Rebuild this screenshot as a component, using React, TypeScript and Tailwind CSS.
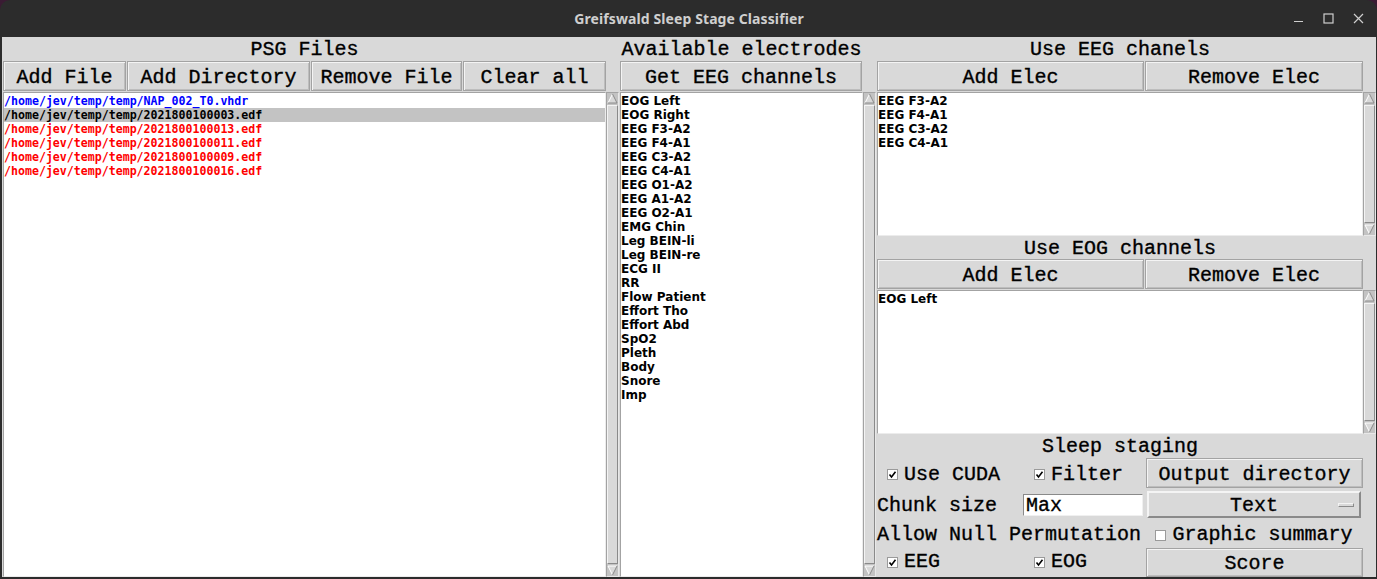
import React from "react";

const MONO = "font-['Liberation_Mono',monospace] [-webkit-text-stroke:0.35px_#000]";

function Heading({ children, className = "" }: { children: React.ReactNode; className?: string }) {
  return (
    <div className={"flex items-center justify-center pt-[2px] text-[20px] leading-none text-black " + MONO + " " + className}>
      {children}
    </div>
  );
}

function Btn({ children, className = "" }: { children: React.ReactNode; className?: string }) {
  return (
    <div
      className={
        "flex items-center justify-center pt-[3px] bg-[#d9d9d9] border border-[#a3a3a3] shadow-[inset_1px_1px_0_#f4f4f4,inset_-1px_-1px_0_#bdbdbd] text-[20px] leading-none text-black whitespace-pre " +
        MONO +
        " " +
        className
      }
    >
      {children}
    </div>
  );
}

function Arrow({ up }: { up: boolean }) {
  return (
    <svg width="11" height="11" viewBox="0 0 11 11" className="block shrink-0">
      {up ? (
        <>
          <polygon points="5.5,1 10,10 1,10" fill="#d9d9d9" />
          <path d="M1 10 L5.5 1" stroke="#ffffff" strokeWidth="1" fill="none" />
          <path d="M5.5 1 L10 10 L1 10" stroke="#8a8a8a" strokeWidth="1" fill="none" />
        </>
      ) : (
        <>
          <polygon points="1,1 10,1 5.5,10" fill="#d9d9d9" />
          <path d="M5.5 10 L1 1 L10 1" stroke="#ffffff" strokeWidth="1" fill="none" />
          <path d="M10 1 L5.5 10" stroke="#8a8a8a" strokeWidth="1" fill="none" />
        </>
      )}
    </svg>
  );
}

function Scrollbar() {
  return (
    <div className="flex flex-col w-[13px] shrink-0 bg-[#c3c3c3] border border-[#a3a3a3] border-r-[#e8e8e8] border-b-[#e8e8e8]">
      <Arrow up />
      <div className="flex-1 my-px bg-[#d9d9d9] border border-t-[#f4f4f4] border-l-[#f4f4f4] border-b-[#8a8a8a] border-r-[#8a8a8a]" />
      <Arrow up={false} />
    </div>
  );
}

function Listbox({ children, className = "" }: { children?: React.ReactNode; className?: string }) {
  return (
    <div
      className={
        "bg-white border border-t-[#a3a3a3] border-l-[#a3a3a3] border-b-[#ececec] border-r-[#ececec] pt-px overflow-hidden " +
        className
      }
    >
      {children}
    </div>
  );
}

function Check({ checked }: { checked: boolean }) {
  return (
    <svg width="11" height="11" viewBox="0 0 11 11" className="block shrink-0">
      <rect x="0.5" y="0.5" width="10" height="10" fill="#ffffff" stroke="#9a9a9a" />
      {checked && <path d="M2.5 5.5 L4.5 8 L8.5 2.8" stroke="#000" strokeWidth="1.6" fill="none" />}
    </svg>
  );
}

function CheckLabel({ checked, label, className = "" }: { checked: boolean; label: string; className?: string }) {
  return (
    <div className={"flex items-center gap-[6px] text-[20px] leading-none text-black " + MONO + " " + className}>
      <Check checked={checked} />
      <span className="whitespace-pre">{label}</span>
    </div>
  );
}

const psgFiles: { name: string; color: string; sel?: boolean }[] = [
  { name: "/home/jev/temp/temp/NAP_002_T0.vhdr", color: "text-[#0000ff]" },
  { name: "/home/jev/temp/temp/2021800100003.edf", color: "text-black", sel: true },
  { name: "/home/jev/temp/temp/2021800100013.edf", color: "text-[#ff0000]" },
  { name: "/home/jev/temp/temp/2021800100011.edf", color: "text-[#ff0000]" },
  { name: "/home/jev/temp/temp/2021800100009.edf", color: "text-[#ff0000]" },
  { name: "/home/jev/temp/temp/2021800100016.edf", color: "text-[#ff0000]" },
];

const electrodes = [
  "EOG Left",
  "EOG Right",
  "EEG F3-A2",
  "EEG F4-A1",
  "EEG C3-A2",
  "EEG C4-A1",
  "EEG O1-A2",
  "EEG A1-A2",
  "EEG O2-A1",
  "EMG Chin",
  "Leg BEIN-li",
  "Leg BEIN-re",
  "ECG II",
  "RR",
  "Flow Patient",
  "Effort Tho",
  "Effort Abd",
  "SpO2",
  "Pleth",
  "Body",
  "Snore",
  "Imp",
];

const ITEM = "h-[14px] leading-[14px] text-[12px] font-bold text-black whitespace-pre font-['DejaVu_Sans',sans-serif]";

export default function App() {
  return (
    <div className="w-[1377px] h-[579px] bg-[#3a1b33] overflow-hidden">
      <div className="flex flex-col h-[579px] rounded-t-[10px] overflow-hidden bg-[#2c2c2c] pl-[2px] pr-[1px] pb-[2px]">
        {/* Title bar */}
        <div className="relative flex items-center justify-center h-[37px] shrink-0">
          <span className="text-[14px] font-bold text-[#cfcfcf] font-['Noto_Sans',sans-serif] tracking-[0.1px]">
            Greifswald Sleep Stage Classifier
          </span>
          <div className="absolute right-[12px] top-0 h-[37px] flex items-center gap-[19px]">
            <svg width="11" height="11" viewBox="0 0 11 11">
              <path d="M1 8.5 H10" stroke="#cfcfcf" strokeWidth="1.2" />
            </svg>
            <svg width="11" height="11" viewBox="0 0 11 11">
              <rect x="1" y="1" width="9" height="9" fill="none" stroke="#cfcfcf" strokeWidth="1.2" />
            </svg>
            <svg width="11" height="11" viewBox="0 0 11 11">
              <path d="M1 1 L10 10 M10 1 L1 10" stroke="#cfcfcf" strokeWidth="1.2" />
            </svg>
          </div>
        </div>

        {/* Content */}
        <div className="flex flex-1 bg-[#d9d9d9] pl-px gap-px min-h-0">
          {/* Left column */}
          <div className="flex flex-col w-[616px] shrink-0">
            <Heading className="h-[24px] w-[603px]">PSG Files</Heading>
            <div className="flex gap-px h-[30px] w-[603px]">
              <Btn className="w-[123px]">Add File</Btn>
              <Btn className="w-[183px]">Add Directory</Btn>
              <Btn className="w-[151px]">Remove File</Btn>
              <Btn className="w-[143px]">Clear all</Btn>
            </div>
            <div className="flex flex-1 mt-px min-h-0">
              <Listbox className="w-[603px]">
                {psgFiles.map((f) => (
                  <div
                    key={f.name}
                    className={
                      "h-[14px] leading-[14px] text-[11.6px] font-bold whitespace-pre font-['DejaVu_Sans_Mono',monospace] " +
                      f.color +
                      (f.sel ? " bg-[#c3c3c3]" : "")
                    }
                  >
                    {f.name}
                  </div>
                ))}
              </Listbox>
              <Scrollbar />
            </div>
          </div>

          {/* Middle column */}
          <div className="flex flex-col w-[256px] shrink-0">
            <Heading className="h-[24px] w-[243px]">Available electrodes</Heading>
            <Btn className="h-[30px] w-[242px]">Get EEG channels</Btn>
            <div className="flex flex-1 mt-px min-h-0">
              <Listbox className="w-[243px]">
                {electrodes.map((e) => (
                  <div key={e} className={ITEM}>
                    {e}
                  </div>
                ))}
              </Listbox>
              <Scrollbar />
            </div>
          </div>

          {/* Right column */}
          <div className="flex flex-col w-[499px] shrink-0">
            <Heading className="h-[24px] w-[486px]">Use EEG chanels</Heading>
            <div className="flex gap-px h-[30px] w-[486px]">
              <Btn className="w-[267px]">Add Elec</Btn>
              <Btn className="w-[218px]">Remove Elec</Btn>
            </div>
            <div className="flex h-[144px] mt-px">
              <Listbox className="w-[486px]">
                {["EEG F3-A2", "EEG F4-A1", "EEG C3-A2", "EEG C4-A1"].map((e) => (
                  <div key={e} className={ITEM}>
                    {e}
                  </div>
                ))}
              </Listbox>
              <Scrollbar />
            </div>

            <Heading className="h-[23px] w-[486px]">Use EOG channels</Heading>
            <div className="flex gap-px h-[30px] w-[486px]">
              <Btn className="w-[267px]">Add Elec</Btn>
              <Btn className="w-[218px]">Remove Elec</Btn>
            </div>
            <div className="flex h-[144px] mt-px">
              <Listbox className="w-[486px]">
                <div className={ITEM}>EOG Left</div>
              </Listbox>
              <Scrollbar />
            </div>

            <Heading className="h-[24px] w-[486px]">Sleep staging</Heading>
            <div className="grid grid-cols-[144px_124px_218px] grid-rows-[30px_31px_29px_29px] w-[486px]">
              {/* row 1 */}
              <CheckLabel checked label="Use CUDA" className="pl-[10px] pt-[3px]" />
              <CheckLabel checked label="Filter" className="pl-[13px] pt-[3px]" />
              <Btn className="ml-px h-[30px]">Output directory</Btn>

              {/* row 2 */}
              <div className={"flex items-center pt-[4px] text-[20px] leading-none text-black whitespace-pre " + MONO}>Chunk size</div>
              <div className="flex items-center px-[2px] pt-[2px]">
                <div
                  className={
                    "w-[120px] h-[22px] bg-white border border-t-[#8a8a8a] border-l-[#8a8a8a] border-b-[#f0f0f0] border-r-[#f0f0f0] flex items-center pl-[2px] pt-[2px] text-[20px] leading-none text-black " +
                    MONO
                  }
                >
                  Max
                </div>
              </div>
              <div className="flex items-center pl-[2px] pr-px pt-[2px]">
                <div className="relative flex items-center justify-center w-[214px] h-[27px] pt-[3px] bg-[#d9d9d9] border-2 border-t-[#f4f4f4] border-l-[#f4f4f4] border-b-[#8a8a8a] border-r-[#8a8a8a]">
                  <span className={"text-[20px] leading-none text-black " + MONO}>Text</span>
                  <div className="absolute right-[5px] top-[10px] w-[16px] h-[4px] bg-[#d9d9d9] border border-t-[#f4f4f4] border-l-[#f4f4f4] border-b-[#8a8a8a] border-r-[#8a8a8a]" />
                </div>
              </div>

              {/* row 3 */}
              <div className={"col-span-2 flex items-center pt-[3px] text-[20px] leading-none text-black whitespace-pre " + MONO}>
                Allow Null Permutation
              </div>
              <div className="flex items-center justify-center pt-[3px]">
                <CheckLabel checked={false} label="Graphic summary" />
              </div>

              {/* row 4 */}
              <CheckLabel checked label="EEG" className="pl-[10px] pb-[1px]" />
              <CheckLabel checked label="EOG" className="pl-[13px] pb-[1px]" />
              <Btn className="ml-px h-[29px]">Score</Btn>
            </div>
          </div>
        </div>
      </div>
    </div>
  );
}
